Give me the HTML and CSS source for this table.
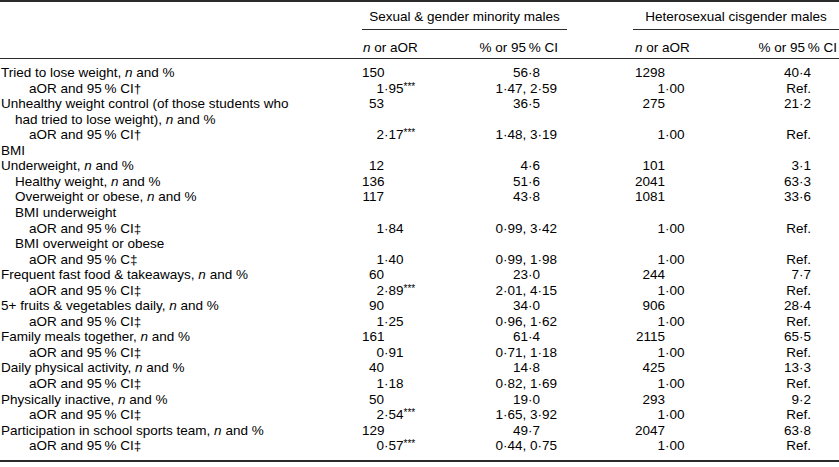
FILE: index.html
```html
<!DOCTYPE html>
<html lang="en">
<head>
<meta charset="utf-8">
<title>Weight, BMI and lifestyle by sexual and gender identity</title>
<link rel="stylesheet" href="styles.css">
</head>
<body>
<table class="data">
  <colgroup>
    <col class="w-label"><col class="w-c1"><col class="w-c2"><col class="w-gap"><col class="w-c3"><col class="w-c4">
  </colgroup>
  <thead>
    <tr class="h1">
      <th></th>
      <th colspan="2" class="grp">Sexual &amp; gender minority males</th>
      <th></th>
      <th colspan="2" class="grp">Heterosexual cisgender males</th>
    </tr>
    <tr class="h2">
      <th></th>
      <th class="c1"><i>n</i> or aOR</th>
      <th class="c2">% or 95&#8201;% CI</th>
      <th></th>
      <th class="c3"><i>n</i> or aOR</th>
      <th class="c4">% or 95&#8201;% CI</th>
    </tr>
  </thead>
  <tbody>
    <tr class="first"><td class="l0">Tried to lose weight, <i>n</i> and %</td><td class="c1"><span class="ip">150</span></td><td class="c2 pct">56·8</td><td></td><td class="c3"><span class="ip">1298</span></td><td class="c4">40·4</td></tr>
    <tr><td class="l2">aOR and 95&#8201;% CI†</td><td class="c1"><span class="ip">1</span>·95<sup>***</sup></td><td class="c2 ci">1·47, 2·59</td><td></td><td class="c3"><span class="ip">1</span>·00</td><td class="c4">Ref.</td></tr>
    <tr><td class="l0">Unhealthy weight control (of those students who</td><td class="c1"><span class="ip">53</span></td><td class="c2 pct">36·5</td><td></td><td class="c3"><span class="ip">275</span></td><td class="c4">21·2</td></tr>
    <tr><td class="l1">had tried to lose weight), <i>n</i> and %</td><td></td><td></td><td></td><td></td><td></td></tr>
    <tr><td class="l2">aOR and 95&#8201;% CI†</td><td class="c1"><span class="ip">2</span>·17<sup>***</sup></td><td class="c2 ci">1·48, 3·19</td><td></td><td class="c3"><span class="ip">1</span>·00</td><td class="c4">Ref.</td></tr>
    <tr><td class="l0">BMI</td><td></td><td></td><td></td><td></td><td></td></tr>
    <tr><td class="l0">Underweight, <i>n</i> and %</td><td class="c1"><span class="ip">12</span></td><td class="c2 pct">4·6</td><td></td><td class="c3"><span class="ip">101</span></td><td class="c4">3·1</td></tr>
    <tr><td class="l1">Healthy weight, <i>n</i> and %</td><td class="c1"><span class="ip">136</span></td><td class="c2 pct">51·6</td><td></td><td class="c3"><span class="ip">2041</span></td><td class="c4">63·3</td></tr>
    <tr><td class="l1">Overweight or obese, <i>n</i> and %</td><td class="c1"><span class="ip">117</span></td><td class="c2 pct">43·8</td><td></td><td class="c3"><span class="ip">1081</span></td><td class="c4">33·6</td></tr>
    <tr><td class="l1">BMI underweight</td><td></td><td></td><td></td><td></td><td></td></tr>
    <tr><td class="l2">aOR and 95&#8201;% CI‡</td><td class="c1"><span class="ip">1</span>·84</td><td class="c2 ci">0·99, 3·42</td><td></td><td class="c3"><span class="ip">1</span>·00</td><td class="c4">Ref.</td></tr>
    <tr><td class="l1">BMI overweight or obese</td><td></td><td></td><td></td><td></td><td></td></tr>
    <tr><td class="l2">aOR and 95&#8201;% C‡</td><td class="c1"><span class="ip">1</span>·40</td><td class="c2 ci">0·99, 1·98</td><td></td><td class="c3"><span class="ip">1</span>·00</td><td class="c4">Ref.</td></tr>
    <tr><td class="l0">Frequent fast food &amp; takeaways, <i>n</i> and %</td><td class="c1"><span class="ip">60</span></td><td class="c2 pct">23·0</td><td></td><td class="c3"><span class="ip">244</span></td><td class="c4">7·7</td></tr>
    <tr><td class="l2">aOR and 95&#8201;% CI‡</td><td class="c1"><span class="ip">2</span>·89<sup>***</sup></td><td class="c2 ci">2·01, 4·15</td><td></td><td class="c3"><span class="ip">1</span>·00</td><td class="c4">Ref.</td></tr>
    <tr><td class="l0">5+ fruits &amp; vegetables daily, <i>n</i> and %</td><td class="c1"><span class="ip">90</span></td><td class="c2 pct">34·0</td><td></td><td class="c3"><span class="ip">906</span></td><td class="c4">28·4</td></tr>
    <tr><td class="l2">aOR and 95&#8201;% CI‡</td><td class="c1"><span class="ip">1</span>·25</td><td class="c2 ci">0·96, 1·62</td><td></td><td class="c3"><span class="ip">1</span>·00</td><td class="c4">Ref.</td></tr>
    <tr><td class="l0">Family meals together, <i>n</i> and %</td><td class="c1"><span class="ip">161</span></td><td class="c2 pct">61·4</td><td></td><td class="c3"><span class="ip">2115</span></td><td class="c4">65·5</td></tr>
    <tr><td class="l2">aOR and 95&#8201;% CI‡</td><td class="c1"><span class="ip">0</span>·91</td><td class="c2 ci">0·71, 1·18</td><td></td><td class="c3"><span class="ip">1</span>·00</td><td class="c4">Ref.</td></tr>
    <tr><td class="l0">Daily physical activity, <i>n</i> and %</td><td class="c1"><span class="ip">40</span></td><td class="c2 pct">14·8</td><td></td><td class="c3"><span class="ip">425</span></td><td class="c4">13·3</td></tr>
    <tr><td class="l2">aOR and 95&#8201;% CI‡</td><td class="c1"><span class="ip">1</span>·18</td><td class="c2 ci">0·82, 1·69</td><td></td><td class="c3"><span class="ip">1</span>·00</td><td class="c4">Ref.</td></tr>
    <tr><td class="l0">Physically inactive, <i>n</i> and %</td><td class="c1"><span class="ip">50</span></td><td class="c2 pct">19·0</td><td></td><td class="c3"><span class="ip">293</span></td><td class="c4">9·2</td></tr>
    <tr><td class="l2">aOR and 95&#8201;% CI‡</td><td class="c1"><span class="ip">2</span>·54<sup>***</sup></td><td class="c2 ci">1·65, 3·92</td><td></td><td class="c3"><span class="ip">1</span>·00</td><td class="c4">Ref.</td></tr>
    <tr><td class="l0">Participation in school sports team, <i>n</i> and %</td><td class="c1"><span class="ip">129</span></td><td class="c2 pct">49·7</td><td></td><td class="c3"><span class="ip">2047</span></td><td class="c4">63·8</td></tr>
    <tr class="last"><td class="l2">aOR and 95&#8201;% CI‡</td><td class="c1"><span class="ip">0</span>·57<sup>***</sup></td><td class="c2 ci">0·44, 0·75</td><td></td><td class="c3"><span class="ip">1</span>·00</td><td class="c4">Ref.</td></tr>
  </tbody>
</table>
</body>
</html>
```

FILE: styles.css
```css
html, body {
  margin: 0;
  padding: 0;
  background: #ffffff;
}

body {
  font-family: "Liberation Sans", Arial, sans-serif;
  font-size: 13.5px;
  color: #000000;
}

.data {
  width: 839px;
  table-layout: fixed;
  border-collapse: collapse;
  border-top: 2px solid #2b2b2b;
  border-bottom: 2px solid #2b2b2b;
}

.w-label { width: 362px; }
.w-c1 { width: 83px; }
.w-c2 { width: 122px; }
.w-gap { width: 66px; }
.w-c3 { width: 87px; }
.w-c4 { width: 119px; }

.data th,
.data td {
  padding: 0;
  font-weight: normal;
  line-height: 15.55px;
  height: 15.55px;
  white-space: nowrap;
  vertical-align: top;
}

.data thead tr.h1 th {
  padding-top: 7px;
  padding-bottom: 4px;
}

.data th.grp {
  text-align: center;
  border-bottom: 1px solid #2b2b2b;
}

.data thead tr.h2 th {
  padding-top: 10px;
  padding-bottom: 3px;
  border-bottom: 1px solid #2b2b2b;
}

.data tbody tr.first td {
  padding-top: 6px;
}

.data tbody tr.last td {
  padding-bottom: 6px;
}

.data td.l0 { padding-left: 1px; }
.data td.l1 { padding-left: 15px; }
.data td.l2 { padding-left: 29px; }

.data th.c1 { text-align: left; padding-left: 1px; }
.data th.c2 { text-align: right; padding-right: 9px; }
.data th.c3 { text-align: left; padding-left: 2px; }
.data th.c4 { text-align: right; padding-right: 2px; }

.data td.c1 { text-align: left; padding-left: 0; }
.data td.c3 { text-align: left; padding-left: 0; }
.data td.c2 { text-align: right; }
.data td.c2.pct { padding-right: 27px; }
.data td.c2.ci { padding-right: 10px; }
.data td.c4 { text-align: right; padding-right: 28px; }

.c1 .ip {
  display: inline-block;
  width: 22px;
  text-align: right;
}

.c3 .ip {
  display: inline-block;
  width: 32px;
  text-align: right;
}

sup {
  font-size: 10px;
  line-height: 0;
  vertical-align: 3px;
}
```
